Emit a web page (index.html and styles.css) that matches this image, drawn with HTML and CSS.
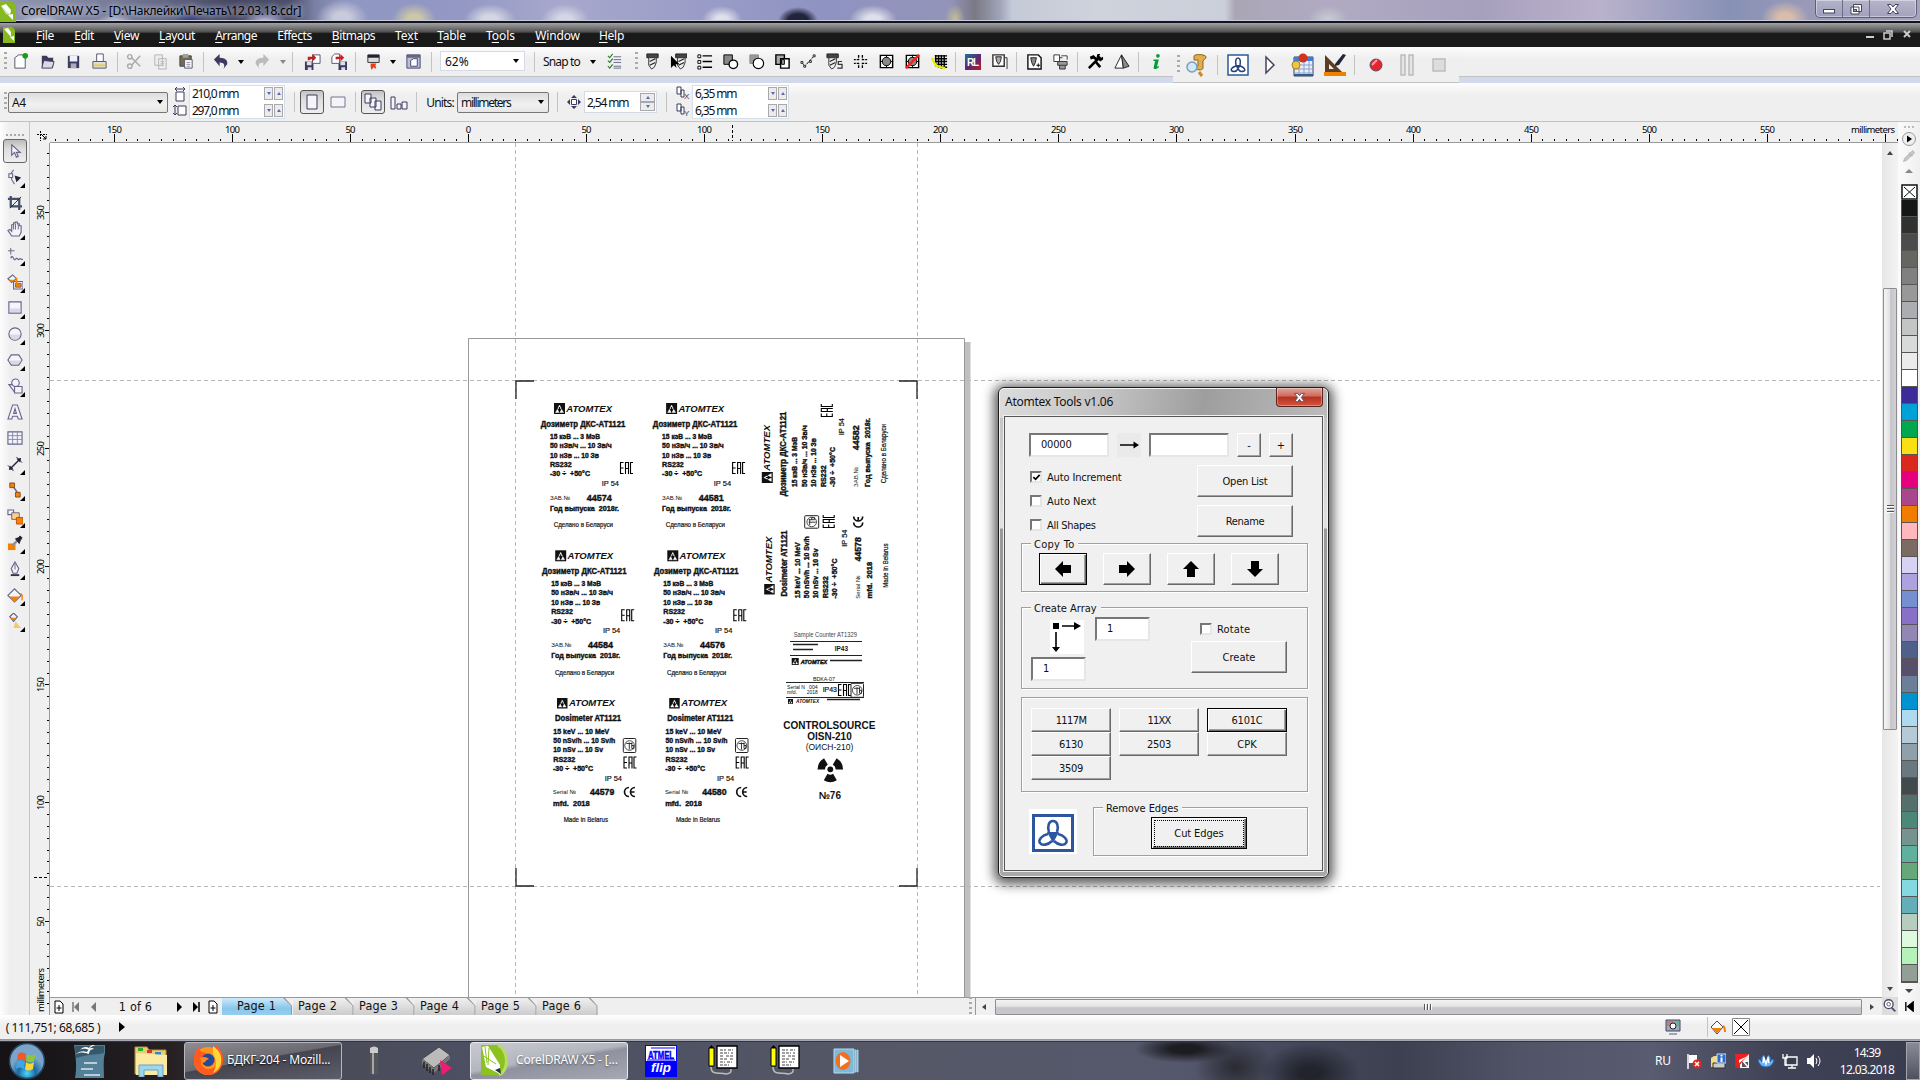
FILE: index.html
```html
<!DOCTYPE html>
<html lang="en">
<head>
<meta charset="utf-8">
<title>CorelDRAW X5</title>
<link rel="stylesheet" href="styles.css">
</head>
<body>
<header class="titlebar">
  <svg class="app-logo" viewBox="0 0 16 20"><path d="M0 0h13l3 4v16H0z" fill="#86b81f"/><path d="M1 4l9 9 1-5-5-6zM8 13l5 5v-6z" fill="#fff"/><path d="M1 4l5 8 4 1z" fill="#d4ecc0"/></svg>
  <span class="title-text" data-w="280">CorelDRAW X5 - [D:\Наклейки\Печать\12.03.18.cdr]</span>
  <div class="win-buttons">
    <span class="wb"><svg viewBox="0 0 14 12"><rect x="1.500" y="6.500" width="11" height="3.500" fill="#fff" stroke="#43465a"/></svg></span>
    <span class="wb"><svg viewBox="0 0 14 12"><path d="M4.500 1.500h8v7h-8zM2 4h8v7H2z" fill="#fff" stroke="#43465a"/><rect x="4.500" y="6.500" width="3" height="2" fill="#9a9bb5" stroke="#43465a"/></svg></span>
    <span class="wb wide"><svg viewBox="0 0 14 12"><path d="M1.500 1.500h3.500l2 2.500 2-2.500h3.500L9 6l3.500 4.500H9L7 8l-2 2.500H1.500L5 6z" fill="#fff" stroke="#43465a"/></svg></span>
  </div>
</header>
<nav class="menubar">
  <div class="row" id="menu"></div>
</nav>
<div class="toolbar-band">
  <div class="row toolbar-main" id="tools"></div>
  <div class="row toolbar-float" id="macros"></div>
  <div class="toolbar-rest"></div>
</div>
<div class="dock-strip"></div>
<div class="row propbar" id="props"></div>
<main class="main">
  <aside class="toolbox" id="toolbox"></aside>
  <section class="work">
    <svg class="ruler-h" id="rulerH" viewBox="30 122 1868 21"></svg>
    <svg class="ruler-v" id="rulerV" viewBox="30 143 20 872"></svg>
    <svg class="canvas" id="canvas" viewBox="50 143 1832 854"></svg>
    <div class="vscroll">
      <span class="arr up"></span><span class="vthumb"><i></i><i></i><i></i></span><span class="arr down"></span>
    </div>
    <div class="pagebar">
      <div class="row pager" id="pager"></div>
      <div class="hscroll"><span class="arr left"></span><span class="hthumb"><i></i><i></i><i></i></span><span class="arr right"></span></div>
    </div>
    <div class="nav-zoom"><svg viewBox="0 0 18 18"><circle cx="7.500" cy="7" r="5" fill="#fff" stroke="#4b4966" stroke-width="1.500"/><circle cx="7.500" cy="7" r="2" fill="none" stroke="#4b4966"/><path d="M11 11l4 4" stroke="#4b4966" stroke-width="2"/></svg></div>
  </section>
  <aside class="palette">
    <span class="dots"></span>
    <svg class="pal-go" viewBox="0 0 16 14"><circle cx="8" cy="7" r="6.500" fill="#eee" stroke="#999"/><path d="M6 3.500l5 3.500-5 3.500z"/></svg>
    <svg class="pal-pick" viewBox="0 0 16 16"><path d="M2 14l1-3 5-5 2 2-5 5zM8 4l4 4M9 6l3-4 2 2-3 4z" fill="#ccc" stroke="#bbb" stroke-width="1.300"/></svg>
    <span class="arr up"></span>
    <svg class="nocolor" viewBox="0 0 17 16"><rect x="1" y="1" width="15" height="14" fill="#fff" stroke="#111" stroke-width="1.500"/><path d="M3 3l11 10M14 3L3 13" stroke="#111"/></svg>
    <div class="swatches" id="swatches"></div>
    <span class="arr down"></span>
    <svg class="pal-end" viewBox="0 0 12 12"><path d="M2 1v10M10 1L4 6l6 5z" stroke="#000" stroke-width="1.500"/></svg>
  </aside>
</main>
<footer class="row statusbar" id="status"></footer>
<div class="row taskbar" id="taskbar"></div>

<section class="dialog">
  <div class="dlg-title"><span data-w="108">Atomtex Tools v1.06</span>
    <button class="dlg-close"><svg viewBox="0 0 14 12"><path d="M1.500 1.500h3.500l2 2.500 2-2.500h3.500L9 6l3.500 4.500H9L7 8l-2 2.500H1.500L5 6z" fill="#fff" stroke="#5b4a55"/></svg></button></div>
  <div class="dlg-body">
    <div class="dlg-numbers">
      <span class="field f80"><b data-w="30">00000</b></span>
      <span class="arrow-pic"><svg viewBox="0 0 24 24"><path d="M3 12h16" stroke="#000" stroke-width="1.500"/><path d="M16.500 8.500L22 12l-5.500 3.500z"/></svg></span>
      <span class="field f80"></span>
      <button class="btn sq">-</button><button class="btn sq">+</button>
    </div>
    <div class="dlg-options">
      <div class="checks">
        <label><i class="cb"><svg viewBox="0 0 10 10"><path d="M1.500 4.500l2.500 2.500 4.500-5" fill="none" stroke="#000" stroke-width="2"/></svg></i><span data-w="75">Auto Increment</span></label>
        <label><i class="cb"></i><span data-w="49">Auto Next</span></label>
        <label><i class="cb"></i><span data-w="49">All Shapes</span></label>
      </div>
      <div class="stack"><button class="btn big"><span data-w="45">Open List</span></button><button class="btn big"><span data-w="39">Rename</span></button></div>
    </div>
    <div class="group copy"><span class="legend"><span data-w="40">Copy To</span></span>
      <button class="btn ab def"><svg viewBox="0 0 16 16"><path d="M0 8l8-8v4h8v8H8v4z"/></svg></button>
      <button class="btn ab"><svg viewBox="0 0 16 16"><path d="M16 8L8 0v4H0v8h8v4z"/></svg></button>
      <button class="btn ab"><svg viewBox="0 0 16 16"><path d="M8 0l8 8h-4v8H4V8H0z"/></svg></button>
      <button class="btn ab"><svg viewBox="0 0 16 16"><path d="M8 16l8-8h-4V0H4v8H0z"/></svg></button>
    </div>
    <div class="group array"><span class="legend"><span data-w="63">Create Array</span></span>
      <div class="arr-col">
        <span class="arr-pic"><svg viewBox="0 0 34 34"><path d="M3 3h6v6H3zM24 2l7 4-7 4zM2 27h8l-4 5z"/><path d="M12 6h14M6 12v17" stroke="#000" stroke-width="1.600"/></svg></span>
        <span class="field f55">1</span>
      </div>
      <span class="field f55 top">1</span>
      <div class="rot"><label><i class="cb"></i><span data-w="33">Rotate</span></label><button class="btn big"><span data-w="33">Create</span></button></div>
    </div>
    <div class="group models">
      <button class="btn"><span data-w="31">1117M</span></button><button class="btn"><span data-w="23">11XX</span></button><button class="btn def"><span data-w="31">6101C</span></button>
      <button class="btn"><span data-w="24">6130</span></button><button class="btn"><span data-w="24">2503</span></button><button class="btn"><span data-w="19">CPK</span></button>
      <button class="btn"><span data-w="24">3509</span></button>
    </div>
    <div class="dlg-foot">
      <svg class="atom" viewBox="0 0 48 45"><rect width="48" height="45" fill="#fff"/><rect x="4.500" y="6.500" width="39" height="35" fill="#fff" stroke="#2d55a0" stroke-width="3"/><g fill="none" stroke="#2d55a0" stroke-width="2.600"><path d="M20 23c-2-6 0-11 4-11s6 5 4 11"/><path d="M19 25c-6 1-10 6-8 9s8 2 12-2"/><path d="M29 25c6 1 10 6 8 9s-8 2-12-2"/></g><path d="M18 23h12l-6 11z" fill="#2d55a0"/></svg>
      <div class="group remove"><span class="legend"><span data-w="72">Remove Edges</span></span>
        <button class="btn big def"><span class="focus"><span data-w="49">Cut Edges</span></span></button></div>
    </div>
  </div>
</section>
<script src="app.js"></script>
</body>
</html>
```
FILE: styles.css
```css
*{box-sizing:border-box}
body{margin:0;width:1920px;height:1080px;overflow:hidden;display:flex;flex-direction:column;background:#f0f0f0;font:12px "Noto Sans",sans-serif;color:#111;position:relative}
svg{display:block;flex:none}
button{font:inherit;color:inherit;padding:0;margin:0;border:0}
.row{display:flex;align-items:center}
.row>*{flex:none}
.cell{display:flex;justify-content:center;align-items:center;white-space:pre}
[data-w]{white-space:pre;display:inline-block}

.titlebar{height:23px;flex:none;display:flex;align-items:flex-start;border-bottom:2px solid #15151f;box-shadow:inset 0 -1px #c8cbdc;
 background:radial-gradient(ellipse 20px 8px at 40px 22px,#dcdde6,transparent),radial-gradient(ellipse 20px 8px at 115px 22px,#cfd2df,transparent),radial-gradient(ellipse 16px 9px at 190px 21px,#2b358f,transparent),radial-gradient(ellipse 22px 9px at 265px 21px,#c4c3ea,transparent),radial-gradient(ellipse 26px 18px at 342px 18px,#c9cadb 30%,transparent),radial-gradient(ellipse 22px 17px at 414px 20px,#cdc8a4 30%,transparent),radial-gradient(ellipse 26px 16px at 490px 20px,#d4d6e4 30%,transparent),radial-gradient(ellipse 24px 16px at 565px 20px,#d3d6e4 30%,transparent),radial-gradient(ellipse 20px 14px at 722px 20px,#dfe0ea 30%,transparent),radial-gradient(ellipse 20px 14px at 798px 21px,#22243c 50%,transparent),radial-gradient(ellipse 24px 15px at 873px 20px,#dfe0e9 30%,transparent),radial-gradient(ellipse 10px 15px at 955px 19px,#c5bd95,transparent),radial-gradient(ellipse 20px 14px at 1328px 20px,#c8cfd0,transparent),radial-gradient(ellipse 24px 18px at 1785px 19px,#d9bda9 30%,transparent),
 linear-gradient(90deg,#8f98b4 0,#858ba5 60px,#686d8a 150px,#454760 230px,#4a4d68 290px,#7a81a5 315px,#8f97c2 345px,#9398c4 460px,#a7a8cd 560px,#8f93c2 820px,#9394b8 950px,#7b7985 975px,#9fa5b8 1000px,#c4cad7 1012px,#cfd3dc 1100px,#cbcfd9 1225px,#aaa6b5 1235px,#b1aac3 1330px,#a7a0bd 1480px,#bab2cc 1600px,#8791b6 1730px,#9a9ab8 1810px,#a6a1bd)}
.app-logo{width:16px;height:20px;margin-top:2px}
.title-text{margin-left:5px;line-height:22px;text-shadow:0 0 5px #cdd3ea,0 0 8px #b8bfda;font-size:12px;color:#000}
.win-buttons{margin-left:auto;margin-right:3px;display:flex;width:102px;height:18px;border:1px solid #5d5f78;border-top:0;border-radius:0 0 5px 5px;background:linear-gradient(#d6d5e366,#a5a2bd66);box-shadow:inset 0 0 0 1px #ffffff66}
.wb{width:27px;display:flex;align-items:center;justify-content:center;border-right:1px solid #6d6e86}
.wb.wide{width:46px;border:0}
.wb svg{width:14px;height:12px}
.menubar{height:24px;flex:none;background:linear-gradient(#a3a3a3,#555 35%,#2f2f2f 42%,#191919 44%);color:#fff}
.menubar .row{height:24px}
.menubar u{text-underline-offset:2px}

.toolbar-band{height:30px;flex:none;display:flex;align-items:flex-start;background:linear-gradient(#fcfcfc,#efefef 40%)}
.toolbar-main{width:1173px;height:30px;border-bottom:1px solid #c2c2c2}
.toolbar-float{width:286px;height:36px;background:linear-gradient(#fcfcfc,#efefef 33%);border-bottom:1px solid #c2c2c2;position:relative;z-index:1}
.toolbar-rest{flex:1;height:30px;border-bottom:1px solid #c2c2c2}
.dock-strip{height:6px;flex:none;background:#d2d9ec}
.sep{height:20px;width:1px;background:#c3c3c3}
.grip{width:3px;height:20px;background:repeating-linear-gradient(#aaa 0 2px,transparent 2px 5px)}
.caret{width:0;height:0;border:3px solid transparent;border-top:4px solid #000;border-bottom:0}
.caret.dim{border-top-color:#888}
.box{background:#fff;border:1px solid #d5dbe4;display:flex;align-items:center;justify-content:space-between;padding:0 5px 0 4px}
.zoombox{height:20px;margin-bottom:1px}
.box.step{height:22px;padding:0 1px 0 2px}
.propbar{height:39px;flex:none;background:linear-gradient(#fdfdfd,#efefef 33%);border-bottom:1px solid #c2c2c2}
.combo{height:21px;border:1px solid #777;border-radius:2px;background:linear-gradient(#ddd,#f1f1f1 60%,#e6e6e6);display:flex;align-items:center;justify-content:space-between;padding:0 4px 0 3px}
.cell.pair{display:flex;flex-direction:column;align-items:stretch;border:1px solid #d5e0ea;background:#fff;height:34px}
.pair>div{flex:1;display:flex;justify-content:space-between;align-items:center;padding:0 1px 0 2px}
.spin{display:flex;gap:1px}
.spin i{width:9px;height:13px;border:1px solid #a9a9ad;background:#ececec;display:flex;align-items:center;justify-content:center}
.spin i::after{content:"";border:2.5px solid transparent;border-top:3px solid #5a6ab5;border-bottom:0}
.spin i.u::after{border-top:0;border-bottom:3px solid #5a6ab5}
.spin.v{flex-direction:column;gap:0}
.spin.v i{width:15px;height:9px}
.pressed{height:24px;border:1px solid #555;border-radius:3px;background:linear-gradient(#c3c3c3,#dedede 40%,#eee);display:flex;align-items:center;justify-content:center}
.icons2{display:flex;flex-direction:column;gap:1px}

.main{height:893px;flex:none;display:flex}
.toolbox{width:30px;border-right:1px solid #c4c4c4;background:linear-gradient(90deg,#fdfdfd,#efefef 33%);padding-top:12px;display:flex;flex-direction:column;align-items:flex-start}
.toolbox::before{content:"";width:18px;height:2px;margin:0 0 3px 6px;background:repeating-linear-gradient(90deg,#aaa 0 2px,transparent 2px 4px);flex:none}
.tool{width:24px;height:24px;margin:0 0 2.12px 3px;display:flex;align-items:center;justify-content:center;flex:none;position:relative}
.tool svg{width:16px;height:16px}
.tool.fly::after{content:"";position:absolute;right:2px;bottom:1px;border-left:5px solid transparent;border-bottom:5px solid #000}
.tool.on{border:1px solid #666;border-radius:3px;background:linear-gradient(#bbb,#ddd 40%,#eee)}
.work{width:1868px;display:grid;grid-template-columns:20px 1832px 16px;grid-template-rows:21px 854px 18px}
.ruler-h{grid-column:1/4;width:1868px;height:21px}
.ruler-v{grid-row:2/4;grid-column:1;width:20px;height:872px}
.canvas{width:1832px;height:854px;background:#fff}
svg text{font-family:"Liberation Sans",Arial,sans-serif}
.ruler-h text,.ruler-v text{font-family:"Noto Sans",sans-serif;font-size:9.5px;text-anchor:middle}
.vscroll{display:flex;flex-direction:column;align-items:center;justify-content:space-between;padding:8px 0 6px;background:linear-gradient(90deg,#e6e6e6,#f3f3f3)}
.arr{width:0;height:0;border:3px solid transparent;flex:none}
.arr.up{border-bottom:4px solid #444;border-top:0}
.arr.down{border-top:4px solid #444;border-bottom:0}
.arr.left{border-right:4px solid #444;border-left:0}
.arr.right{border-left:4px solid #444;border-right:0}
.vthumb{width:14px;height:442px;margin-bottom:125px;border:1px solid #8d8d90;border-radius:1px;background:linear-gradient(90deg,#f4f4f4,#e4e4e6 45%,#c6c6ca 55%,#d2d2d6);display:flex;flex-direction:column;gap:1px;align-items:center;justify-content:center}
.vthumb i{width:7px;height:2px;border-top:1px solid #555;background:#fff}
.pagebar{display:flex;border-top:1px solid #999;background:#efefef;grid-column:2}
.pager{width:926px;height:17px;border-right:1px solid #999}
.hscroll{flex:1;display:flex;align-items:center;justify-content:space-between;padding:0 8px 0 6px;background:#f0f0f0}
.hthumb{width:867px;height:16px;border:1px solid #8d8d90;border-radius:1px;background:linear-gradient(#f4f4f4,#e4e4e6 45%,#c6c6ca 55%,#c9c9cc);display:flex;gap:1px;align-items:center;justify-content:center}
.hthumb i{height:6px;width:2px;border-left:1px solid #555;background:#fff}
.nav-zoom svg{width:16px;height:18px;background:#ddd}
.pg{font:12.5px "DejaVu Sans Condensed","DejaVu Sans",sans-serif;height:17px}
.tab{height:17px;clip-path:polygon(0 0,calc(100% - 8px) 0,100% 45%,100% 100%,0 100%);background:linear-gradient(#f0f0f0,#ccc)}
.tabwrap{height:17px;background:#999;clip-path:polygon(0 0,calc(100% - 7px) 0,100% 45%,100% 100%,0 100%);padding-right:1px}
.tab.on{background:linear-gradient(#cdebfb,#8ac6ea 60%,#94cdee)}
.tab .cell{height:15px;padding-right:10px}
.tab.on .cell{padding-right:0}
.palette{width:22px;display:flex;flex-direction:column;align-items:center;background:linear-gradient(90deg,#fbfbfb,#f0f0f0);padding-top:4px}
.dots{width:11px;height:2px;background:repeating-linear-gradient(90deg,#bbb 0 2px,transparent 2px 4px)}
.pal-go{width:16px;height:14px;margin-top:4px}
.pal-pick{width:14px;height:14px;margin:3px 0 6px}
.palette .arr{border-left-width:4px;border-right-width:4px}
.palette .arr.up{border-bottom-color:#888}
.nocolor{width:17px;height:16px;margin-top:11px}
.swatches{width:17px;border:1px solid #555;border-top:0}
.swatches i{display:block;height:17px;border-bottom:1px solid #555}
.palette .arr.down{margin:6px 0 8px}
.pal-end{width:13px;height:11px}

.statusbar{height:25px;flex:none;background:linear-gradient(#fff,#efefef 40%);border-bottom:1px solid #999}
.taskbar{height:40px;flex:none;color:#fff;border-top:1px solid #a5a8b2;box-shadow:inset 0 1px #33343e;background:
 radial-gradient(ellipse 50px 14px at 1185px 8px,#1d1c22 30%,transparent),
 radial-gradient(ellipse 40px 30px at 1235px 26px,#2a2a32,transparent),
 radial-gradient(ellipse 50px 30px at 1310px 32px,#22232c 20%,transparent),
 linear-gradient(90deg,#141214 0,#1d1a1e 100px,#262022 170px,#3a3944 260px,#4a4c59 345px,#4d5063 480px,#4f5262 640px,#565867 900px,#55586c 1180px,#44485a 1290px,#3d4050 1400px,#515467 1520px,#595c70 1650px,#3f4255 1780px,#3a3d4e)}
.tbtn{height:38px;border:1px solid #b7b8bf;border-radius:3px;color:#fff;background:linear-gradient(170deg,#8f8d92,#6b6a72 45%,#454550 47%,#5d5e6b);text-shadow:0 1px 2px #000}
.cell.tbtn{justify-content:flex-start;gap:2px;padding:0 0 2px 6px}
.cell.tbtn.on{gap:5px}
.tbtn.on{background:linear-gradient(170deg,#c9cad0,#b4b6bf 45%,#8f929e 52%,#a6a8b3);border-color:#e9e9ee;text-shadow:0 1px 2px #555}
.cell.clock{display:flex;flex-direction:column;align-items:center;line-height:17px}
.showdesk{height:38px;border:1px solid #a2a3ab;background:linear-gradient(#8a8b98,#4f5160)}

.dialog{position:absolute;left:998px;top:387px;width:331px;height:491px;border:1px solid #1c1c1c;border-radius:6px;padding:0 5px 6px;background:linear-gradient(100deg,#dcdcdc 0,#c6c6c6 30%,#9e9e9e 62%,#bcbcbc) 0 0/100% 30px no-repeat,linear-gradient(#bbb,#e2e2e2 140px,#999 141px,#a9a9a9);box-shadow:inset 0 0 0 1px #f3f3f3,0 2px 12px 4px #000000a8;font:11px "DejaVu Sans Condensed","DejaVu Sans",sans-serif}
.dlg-title{height:28px;display:flex;justify-content:space-between;font:12px "Noto Sans",sans-serif;line-height:27px;padding-left:1px}
.dlg-close{width:47px;height:19px;border:1px solid #5a2420;border-top:0;border-radius:0 0 4px 4px;background:linear-gradient(#e0a59a,#cf6a5b 45%,#b5301f 50%,#d5563f);display:flex;justify-content:center;align-items:center;box-shadow:inset 0 0 0 1px #ffffff50}
.dlg-close svg{width:13px;height:11px}
.dlg-body{height:455px;border:1px solid #555;box-shadow:0 0 0 1px #f0f0f0;background:#f0f0f0;padding:16px 0 0 16px;display:flex;flex-direction:column;align-items:flex-start}
.dlg-numbers{display:flex;gap:8px;margin-left:8px}
.field{height:24px;background:#fff;border:2px solid;border-color:#777 #e6e6e6 #e6e6e6 #777;padding:2px 0 0 10px;line-height:15px}
.field b{font-weight:400}
.f80{width:80px}.f55{width:55px}
.arrow-pic{width:24px;height:24px;background:#eaeaea}
.btn{background:#f0f0f0;border:1px solid;border-color:#fff #696969 #696969 #fff;box-shadow:inset -1px -1px #a0a0a0;display:flex;align-items:center;justify-content:center}
.sq{width:24px;height:24px}
.dlg-options{display:flex;margin-left:9px;margin-top:8px;height:72px}
.checks{width:167px;display:flex;flex-direction:column;gap:0}
label{display:flex;align-items:center;gap:5px;height:24px}
.cb{width:12px;height:12px;background:#fff;border:2px solid;border-color:#777 #e6e6e6 #e6e6e6 #777;flex:none}
.cb svg{width:9px;height:9px}
.stack{display:flex;flex-direction:column;gap:8px}
.big{width:96px;height:32px}
.group{width:287px;border:1px solid #a0a0a0;box-shadow:1px 1px #fff,inset 1px 1px #fff;position:relative;display:flex;flex:none}
.legend{position:absolute;left:9px;top:-7px;background:#f0f0f0;padding:0 4px 0 3px;line-height:15px}
.copy{height:49px;margin-top:6px;padding:9px 0 0 17px;gap:16px}
.ab{width:48px;height:32px}
.ab svg{width:16px;height:16px}
.def{border-color:#000;box-shadow:inset 1px 1px #fff,inset -1px -1px #696969,inset -2px -2px #a0a0a0}
.array{height:82px;margin-top:15px;padding:9px 0 0 9px}
.arr-col{width:64px;display:flex;flex-direction:column;padding-top:3px}
.arr-pic{margin-left:19px;width:34px;height:34px;background:#fff}
.arr-col .field{margin-top:3px}
.rot{margin-left:41px}
.rot label{margin-left:9px}
.models{height:95px;margin-top:8px;padding:10px 0 0 9px;display:grid;grid-template-columns:80px 80px 80px;grid-auto-rows:24px;column-gap:8px}
.dlg-foot{display:flex;margin:15px 0 0 8px}
.atom{width:48px;height:45px;margin:2px 16px 0 0}
.remove{width:215px;height:49px;padding:9px 0 0 57px}
.focus{outline:1px dotted #000;width:88px;height:25px;display:flex;align-items:center;justify-content:center}
```
FILE: app.js
```js
const $ = id => document.getElementById(id);
const S = (w, h, body) => `<svg width="${w}" height="${h}" viewBox="0 0 ${w} ${h}">${body}</svg>`;
const T = (s, w) => `<span data-w="${w}">${s}</span>`;

// Lays items [centre x, width, markup, class] along a row, starting at x0.
function row(id, items, x0 = 0) {
  let end = x0, out = '';
  for (const [c, w, html, cls = ''] of items) {
    const m = c - w / 2 - end;
    out += `<div class="cell ${cls}" style="margin-left:${m.toFixed(2)}px;width:${w}px">${html}</div>`;
    end += m + w;
  }
  $(id).innerHTML = out;
}
const sep = x => [x, 1, '', 'sep'];
const grip = x => [x, 3, '', 'grip'];
const caret = (x, d = '') => [x, 6, `<i class="caret ${d}"></i>`];
const I = (x, body) => [x, 17, `<svg width="17" height="17" viewBox="0 0 18 18">${body}</svg>`];

const N = '#3c3a5e';
const page = '<path d="M3 5l4-3h7v14H3z" fill="#fff" stroke="#55536f"/>';
const floppy = (x, y) => `<g transform="translate(${x} ${y})"><path d="M0 0h9v9H0z" fill="${N}"/><path d="M2 0h5v4H2zM3 6h4v3H3z" fill="#dde"/></g>`;
const screw = '<path d="M3 1h12v4H3z" fill="#444" stroke="#222"/><path d="M5 5h8v5l-2 5-3 2-3-4z" fill="#eee" stroke="#333"/><path d="M6 9l6-3M6 13l6-3" stroke="#222" stroke-width="1.200"/>';
const eightRect = '<path d="M2.500 2.500h13v13h-13z" fill="#fff" stroke="#000" stroke-width="1.500"/><path d="M2 9h14M9 2v14" stroke="#000"/><circle cx="9" cy="9" r="4.500" fill="#888" stroke="#000"/>';
const red = '#c41e22';

// Menu
row('menu', [[9, 12, S(12, 16, '<path d="M0 0h9l3 3v13H0z" fill="#86b81f"/><path d="M1 2l7 8V5L5 1zM7 10l4 4v-5z" fill="#fff"/>')],
  ...[['<u>F</u>ile', 36, 18], ['<u>E</u>dit', 74, 20], ['<u>V</u>iew', 114, 25], ['<u>L</u>ayout', 159, 36], ['<u>A</u>rrange', 215, 42], ['Effe<u>c</u>ts', 277, 35], ['<u>B</u>itmaps', 332, 43], ['Te<u>x</u>t', 395, 23], ['<u>T</u>able', 437, 29], ['T<u>o</u>ols', 486, 29], ['<u>W</u>indow', 535, 45], ['<u>H</u>elp', 599, 25]].map(([s, x, w]) => [x + w / 2, w, T(s, w)]),
  [1870, 8, S(8, 10, '<path d="M0 6h8v2H0z" fill="#ccc"/>')],
  [1888, 10, S(10, 10, '<path d="M3 1h6v6M1 3h6v6H1z" fill="none" stroke="#ccc" stroke-width="1.500"/>')],
  [1907, 8, S(8, 10, '<path d="M1 1l6 6M7 1L1 7" stroke="#ccc" stroke-width="2"/>')]]);

// Standard toolbar
row('tools', [grip(5),
  I(20, page + '<circle cx="14" cy="3" r="3" fill="#1a9a1a"/>'),
  I(47, `<path d="M3 3h5l2 2h5v10H3z" fill="${N}"/><path d="M5 8l11 1-2 7H3z" fill="#d8dae8" stroke="${N}"/>`),
  I(73, `<path d="M3 3h12v13H3z" fill="${N}"/><path d="M5 3h8v6H5z" fill="#f0f0fa"/><path d="M6 11h6v5H6z" fill="#aab"/>`),
  I(99, '<path d="M6 1h7v8H6z" fill="#fff" stroke="#55536f"/><path d="M2 9h14v7H2z" fill="#ddd" stroke="#55536f"/><path d="M3 13h12" stroke="#e8d040" stroke-width="2"/>'), sep(117),
  I(134, '<path d="M15 3L6 13M15 14L6 5" stroke="#aaa" stroke-width="1.500"/><circle cx="4" cy="4" r="2.300" fill="none" stroke="#aaa" stroke-width="1.500"/><circle cx="4" cy="14" r="2.300" fill="none" stroke="#aaa" stroke-width="1.500"/>'),
  I(160, '<path d="M3 2h8v11H3zM7 6h8v11H7z" fill="#eee" stroke="#b5b5b5"/><path d="M9 9h4M9 11h4M9 13h4" stroke="#bbb"/>'),
  I(186, '<path d="M2 3h12v11H2z" fill="#75694f" stroke="#444"/><path d="M5 1h6v4H5z" fill="#9ea39a"/><path d="M7 7h8v9H7z" fill="#fff" stroke="#55536f"/><path d="M9 10h4M9 12h4M9 14h4" stroke="#88a"/>'), sep(203),
  I(221, `<path d="M7 1v4c6 0 9 3 8 7l-4 5c2-4 1-7-4-7v4L1 7z" fill="${N}"/>`), caret(241),
  I(261, '<path d="M11 1v4c-6 0-9 3-8 7l4 5c-2-4-1-7 4-7v4l6-7z" fill="#bbb"/>'), caret(283, 'dim'), sep(292),
  I(312, `${floppy(1, 9)}<path d="M9 2h8v9H9z" fill="#fff" stroke="#55536f"/><path d="M4 8V4h5V1l4 4-4 4V6z" fill="${red}"/>`),
  I(338, `${floppy(9, 9)}<path d="M2 4l3-3h5v10H2z" fill="#fff" stroke="#55536f"/><path d="M6 7V4h5V1l4 4-4 4V6z" fill="${red}"/>`), sep(355),
  I(373, '<path d="M3 2h12v8H3z" fill="#ddd" stroke="#333"/><path d="M3 2h12v3H3z" fill="#223"/><path d="M6 11h6l-1 2 1 4-3-2-2 3-1-3z" fill="#ee3a10"/>'), caret(393),
  I(413, '<path d="M2 2h14v14H2z" fill="#b9bfdf" stroke="#446"/><path d="M2 2h14v3H2z" fill="#667"/><path d="M6 8l3-2h4v8H6z" fill="#fff" stroke="#446"/>'), sep(431),
  [482.5, 85, T('62%', 24) + '<i class="caret"></i>', 'box zoombox'], sep(534),
  [561.5, 37, T('Snap to', 37)], caret(593),
  I(614, '<path d="M8 4h8M8 7h8M8 10h8M8 14h8M8 16h8" stroke="#668"/><path d="M2 3l2 2 3-4M2 8l2 2 3-4M2 14l2 2 3-4" stroke="#2a7a2a" fill="none" stroke-width="1.200"/>'), grip(636),
  I(652, screw), I(678, `<g transform="translate(3)">${screw}</g><path d="M1 3l9 9-4 0 1 4-3-3-3 3z"/>`),
  I(704, '<path d="M2 2h3v3H2zM2 8h3v3H2zM2 14h3v3H2z" fill="#fff" stroke="#000"/><path d="M7 3h10M7 9h10M7 15h10" stroke="#000" stroke-width="1.500"/>'),
  I(730, '<path d="M2 2h9v10H2z" fill="#888" stroke="#000"/><circle cx="12" cy="12" r="4.500" fill="#fff" stroke="#000" stroke-width="1.400"/>'),
  I(756, '<path d="M2 2h9v9H2z" fill="#999" stroke="#888"/><circle cx="11" cy="11" r="5.500" fill="#fff" stroke="#000" stroke-width="1.200"/>'),
  I(782, '<path d="M2 2h9v10H2z" fill="#aaa" stroke="#000" stroke-width="1.500"/><path d="M7 6h9v10H7z" fill="#fff" stroke="#000" stroke-width="1.500"/><path d="M8 7h3v5H8z" fill="#999" stroke="#000"/>'),
  I(808, '<path d="M2 10l3 4L15 3" fill="none" stroke="#000" stroke-dasharray="3 1"/><path d="M1 9h2v2H1zM4 13h2v2H4zM10 8h2v2h-2zM14 2h2v2h-2z" fill="#fff" stroke="#222"/>'),
  I(834, `<g transform="translate(-2)">${screw}</g><path d="M17 9h-4v3h4v4h-5" fill="none" stroke="#333" stroke-width="1.300"/>`),
  I(860, '<path d="M7 2v5H2M11 2v5h5M7 16v-5H2M11 16v-5h5" fill="none" stroke="#000" stroke-width="1.400" stroke-dasharray="3 1"/>'),
  I(886, eightRect), I(912, eightRect + '<path d="M2 16L16 2" stroke="#e22" stroke-width="2.500"/>'),
  I(939, '<path d="M4 3h13M4 6h13M4 9h13M5 12h12M8 15h9M5 2v12M8 2v14M11 2v15M14 2v15" stroke="#000" stroke-width="1.500"/><path d="M1 5c3 8 5 10 14 11" fill="none" stroke="#e8f000" stroke-width="2.500"/>'), sep(955),
  [973, 18, '<svg width="16" height="16" viewBox="0 0 16 16"><defs><linearGradient id="rl" x2="1" y2="1"><stop stop-color="#167a90"/><stop offset=".5" stop-color="#5a2878"/><stop offset="1" stop-color="#b5201c"/></linearGradient></defs><rect width="16" height="16" fill="url(#rl)"/><text x="2" y="12" font-size="10" font-weight="700" fill="#fff" textLength="12">RL</text></svg>'],
  I(999, '<path d="M5 5h12v12" fill="none" stroke="#333"/><path d="M2 2h12v12H2z" fill="#fff" stroke="#333" stroke-width="1.500"/><path d="M5 4h6l-1 5-2 3-2-3z" fill="#aaa" stroke="#222"/>'), sep(1016),
  I(1034, '<path d="M2 2h11l3 3v12H2z" fill="#fff" stroke="#111" stroke-width="1.500"/><path d="M5 5h6l-1 5-2 4-2-4z" fill="#888" stroke="#222"/><path d="M11 13h4M13 11v4" stroke="#000"/>'),
  I(1060, '<path d="M2 2h6v7H2zM10 3h6v4" fill="#fff" stroke="#333"/><path d="M8 5h3M6 9h10v4H6zM8 13v4h6v-4" fill="#999" stroke="#333"/>'), sep(1077),
  I(1095, '<path d="M2 16L12 6M9 9l5 6" stroke="#000" stroke-width="2.800"/><path d="M3 4l4-2 4 4-2 2-2-2-3 1zM11 1h3l-1 2 2 2 2-1v3l-3 2-4-4z"/>'),
  I(1121, '<path d="M9 2L2 16h9z" fill="#fff" stroke="#222"/><path d="M9 2l8 12-6 2z" fill="#888" stroke="#222"/>'), sep(1138),
  I(1156, '<circle cx="10.500" cy="3" r="2" fill="#0a9a3c"/><path d="M6 7h5.500l-2 7.500 2-.8v1.300c-2 2-6 3-5.500 0l1.500-6.500H5.500z" fill="#0a9a3c"/>')]);

const atom = '<rect x="1" y="1" width="20" height="20" fill="#fff" stroke="#2a5a9a" stroke-width="1.500"/><g fill="none" stroke="#24427c" stroke-width="1.500"><path d="M9 11c-1-4 0-7 2-7s3 3 2 7"/><path d="M9 12c-4 1-6 4-4 5s4 1 6-2"/><path d="M13 12c4 1 6 4 4 5s-4 1-6-2"/></g><path d="M8 11h6l-3 5z" fill="#24427c"/>';
row('macros', [grip(1178),
  [1197, 24, S(24, 24, '<path d="M9 3c0-2 12-2 12 1s-3 2-3 4v7c0 3-8 2-8 0l3-2V7H9z" fill="#dfae50" stroke="#916616"/><path d="M14 19l3 4" stroke="#c88a2a" stroke-width="3"/><circle cx="7" cy="14" r="5" fill="#cdeaf8" stroke="#7d9bb5" stroke-width="1.500"/>')],
  sep(1217), [1238, 22, S(22, 22, atom)],
  [1269.5, 12, S(12, 20, '<path d="M2 2l8 8-8 8z" fill="#fff" stroke="#44425e" stroke-width="1.500"/>')],
  [1302, 24, S(24, 24, '<path d="M4 4h19v19H4z" fill="#e8eefb" stroke="#345"/><path d="M4 4h19v4H4z" fill="#3c7be0"/><path d="M4 12h19M4 16h19M4 20h19M9 8v15M14 8v15M19 8v15" stroke="#8aa2cc"/><path d="M4 22h19" stroke="#345a90" stroke-width="2"/><circle cx="13" cy="5" r="4.500" fill="#d0341c"/><circle cx="6" cy="12" r="4" fill="#f0c63c" stroke="#a5832b"/>')],
  [1335, 24, S(24, 24, '<path d="M2 2v17h17zM6 11l5 5H6z" fill="#5c3c22" fill-rule="evenodd"/><path d="M12 11l8-10 3 1-7 10-4 1z" fill="#23233a"/><path d="M1 19h22v4H1z" fill="#f08000"/>')],
  sep(1354),
  [1375.5, 16, S(16, 16, '<circle cx="8" cy="8" r="6" fill="#e32530" stroke="#5a4a6a"/><path d="M4 8l5-5" stroke="#ff9a9a" stroke-width="2"/>')],
  [1407, 14, S(14, 22, '<path d="M1 1h4v20H1zM9 1h4v20H9z" fill="#e4e4e4" stroke="#bcbcbc" stroke-width="1.500"/>')],
  [1439, 14, S(14, 14, '<path d="M1 1h12v12H1z" fill="#ddd" stroke="#bdbdbd" stroke-width="1.500"/>')]], 1173);

// Property bar
const ST = `stroke="${N}" fill="none"`;
const spin = '<span class="spin"><i></i><i class="u"></i></span>';
const pair = (a, b, w) => `<div>${T(a, w)}${spin}</div><div>${T(b, w)}${spin}</div>`;
row('props', [grip(5), [88, 160, T('A4', 14) + '<i class="caret"></i>', 'combo'],
  [180, 14, `<div class="icons2">${S(14, 15, `<path d="M3 5h8v9H3z" fill="#fff" stroke="${N}"/><path d="M2 2h10M4 0L2 2l2 2M10 0l2 2-2 2" ${ST}/>`)}${S(14, 14, `<path d="M5 3h8v9H5z" fill="#fff" stroke="${N}"/><path d="M2 2v10M0 4l2-2 2 2M0 10l2 2 2-2" ${ST}/>`)}</div>`],
  [237, 96, pair('210,0 mm', '297,0 mm', 46), 'pair'], sep(294),
  [312, 24, S(12, 16, `<path d="M1 1h10v14H1z" fill="#f4f4fa" stroke="${N}"/>`), 'pressed'],
  [338, 16, S(16, 12, '<path d="M1 1h14v10H1z" fill="#f4f4fa" stroke="#77758f"/>')], sep(355),
  [373, 24, S(18, 18, `<path d="M1 1h6v9H1zM6 5h6v9H6zM11 8h6v9h-6z" fill="#f4f4fa" stroke="${N}"/>`), 'pressed'],
  [399, 18, S(18, 18, `<path d="M1 4h4v12H1zM7 11h4v5H7zM12 9h5v7h-5z" fill="#f4f4fa" stroke="${N}"/>`)], sep(416),
  [440, 28, T('Units:', 28)], [503, 92, T('millimeters', 49) + '<i class="caret"></i>', 'combo'], sep(557),
  [574, 14, S(14, 14, `<path d="M4.500 4.500h5v5h-5z" fill="#fff" stroke="${N}"/><path d="M7 0l3 3H4zM7 14l3-3H4zM0 7l3-3v6zM14 7l-3-3v6z" fill="${N}"/>`)],
  [620.500, 73, `${T('2,54 mm', 41)}<span class="spin v"><i class="u"></i><i></i></span>`, 'box step'], sep(666),
  [684, 18, `<div class="icons2">${['X', 'Y'].map(c => S(18, 16, `<path d="M2 1h4v7H2zM6 4h3v7H6z" fill="#fff" stroke="${N}"/><text x="9" y="13" font-size="8" fill="${N}">${c}</text>`)).join('')}</div>`],
  [740.500, 97, pair('6,35 mm', '6,35 mm', 41), 'pair']]);

// Toolbox
const G = 'stroke="#66648a" fill="#f4f4fb" stroke-width="1.200"', O = '#f28200';
const tools = [
  `<path d="M5 2v11l3-3 2 5 2-1-2-4h4z" ${G}/>`,
  `<path d="M7 1C2 6 4 11 8 16" ${G}/><path d="M2 5h4v4H2z" ${G}/><path d="M8 7l7 2-5 5z" fill="#223"/>`,
  `<path d="M4 1v11h12M1 4h12v12" stroke="#44506a" fill="none" stroke-width="2.400"/><path d="M3 14L15 2" stroke="#223"/>`,
  `<path d="M5 16l-4-6 2-1 2 2V4h2V2h2V1h2v2h2v2h2v7l-2 4z" ${G}/><path d="M7 4v5M9 3v6M12 4v5" stroke="#66648a"/>`,
  `<path d="M4 1v7M1 4h7" stroke="#66648a"/><path d="M4 12c2-6 3 4 5 1s3 2 4 0 2 1 4 0" stroke="#66648a" fill="none" stroke-width="1.300"/>`,
  `<path d="M1 5l5-4 4 4-5 4z" ${G}/><path d="M2 6h7l-4 3z" fill="${O}"/><path d="M7 8h10v8H7z" ${G}/><path d="M9 10h6v4H9z" fill="${O}" stroke="#66648a"/><path d="M10 4v7" stroke="${O}" stroke-width="2"/>`,
  `<path d="M2 2h13v12H2z" ${G}/><path d="M3 9h11v4H3z" fill="#d9d9e6"/>`,
  `<circle cx="8.500" cy="8.500" r="6.500" ${G}/><path d="M3 9h11a5.500 5.500 0 0 1-11 0z" fill="#d9d9e6"/>`,
  `<path d="M4.500 3h8l3.500 5.500-3.500 5.500h-8L1 8.500z" ${G}/><path d="M2 9h13l-3 4H5z" fill="#d9d9e6"/>`,
  `<path d="M2 7h6v8zM8 9h8v7H8z" ${G}/><circle cx="9" cy="5" r="4" ${G}/>`,
  `<path d="M1 16L6 1h5l5 15h-4l-1-3H6l-1 3zM7 10h3L8.500 5z" ${G} fill-rule="evenodd"/>`,
  `<path d="M1 2h15v13H1z" ${G}/><path d="M1 6h15M1 10h15M6 2v13M11 2v13" stroke="#8886a4"/>`,
  `<path d="M4 13l9-9" stroke="#223" stroke-width="1.500"/><path d="M1 10l6 6M10 1l6 6" stroke="#223"/><path d="M2 15l1-5 4 4zM15 2l-1 5-4-4z" fill="#223"/>`,
  `<path d="M6 4l7 10" stroke="#66648a" stroke-width="1.500"/><path d="M3 1h5v5H3zM9 11h5v5H9z" fill="${O}" stroke="#8a4a20"/>`,
  `<path d="M1 1h6v5H1z" ${G}/><path d="M5 4h8v7H5z" fill="#ffd080" stroke="#66648a"/><path d="M10 9h7v7h-7z" fill="${O}" stroke="#c05010"/>`,
  `<path d="M1 9h8v7H1z" fill="${O}"/><path d="M6 11l6-6" stroke="#8890a8" stroke-width="2.500"/><path d="M9 4l3-1 2-2 2 2-2 3-1 3z" fill="#223" stroke="#223"/>`,
  `<path d="M8.500 1l4 7-2 5h-4l-2-5z" ${G}/><path d="M8.500 3v6" stroke="#66648a"/><path d="M4 14h9v2H4z" fill="#334"/>`,
  `<path d="M1 9l7-7 7 7-7 7z" ${G}/><path d="M2 10h12l-6 6z" fill="${O}"/><path d="M14 7c3 0 2 4 2 7" stroke="${O}" fill="none" stroke-width="1.500"/>`,
  `<path d="M3 4l4-4 4 4-4 5z" ${G}/><path d="M4 5h6L7 8z" fill="${O}"/><path d="M9 9l6 7H7z" fill="#f7c760"/>`];
const noFly = [0, 10, 11];
$('toolbox').innerHTML = tools.map((t, i) => `<div class="tool ${noFly.includes(i) ? '' : 'fly'} ${i ? '' : 'on'}"><svg viewBox="0 0 17 17">${t}</svg></div>`).join('');

// Rulers: 2.3615 px per mm, origin at the page corner
const K = 2.3615, X0 = 468.5, Y0 = 1039.6;
let h = '<path d="M50 142.500H1898" stroke="#999"/><path d="M37 134.500h10M40.500 131v10" stroke="#000" stroke-dasharray="2 1"/><path d="M41 134l5 5m0-3v3h-3" stroke="#000" fill="none"/>';
for (let m = -175; m <= 605; m += 5) {
  const x = Math.floor(X0 + m * K) + .5, big = m % 50 === 0;
  h += `<path d="M${x} ${big ? 134 : 139}V${big ? 142 : 141}" stroke="#000"/>`;
  if (big && m < 600) h += `<text x="${x}" y="133" textLength="${String(Math.abs(m)).length * 5}">${Math.abs(m)}</text>`;
}
h += '<path d="M732.500 125v16" stroke="#000" stroke-dasharray="3 2"/><text x="1873" y="133" textLength="44">millimeters</text>';
$('rulerH').innerHTML = h;
let v = '<path d="M49.500 143V1015" stroke="#999"/>';
for (let m = 10; m <= 375; m += 5) {
  const y = Math.floor(Y0 - m * K - .5) + .5, big = m % 50 === 0;
  v += `<path d="M${big ? 45 : 47} ${y}H49" stroke="#000"/>`;
  if (big) v += `<text transform="translate(44 ${y}) rotate(-90)" textLength="${String(m).length * 5}">${m}</text>`;
}
v += '<path d="M34 877.500h15" stroke="#000" stroke-dasharray="3 2"/><text transform="translate(44 990) rotate(-90)" textLength="44">millimeters</text>';
$('rulerV').innerHTML = v;

// Drawing
const tx = (x, y, x2, size, s, extra = '') => `<text x="${x}" y="${y}" font-size="${size}" textLength="${(x2 - x).toFixed(1)}" lengthAdjust="spacingAndGlyphs" ${extra}>${s}</text>`;
const B = 'font-weight="700" stroke="#111" stroke-width=".4"', BI = 'font-weight="700" font-style="italic"';
const mark = (x, y, s) => `<g transform="translate(${x} ${y}) scale(${s / 11})"><path d="M0 0h11v11H0z"/><path d="M5.500 2L3.800 5.500h3.400zM3.400 6.200L1.500 9.500h3.600zM7.600 6.200L5.900 9.500h3.600z" fill="#fff" stroke="#fff" stroke-width=".4"/><path d="M5.500 4v5" stroke="#000"/></g>`;
const eac = (x, y) => `<path d="M${x + 3} ${y}h-3v11h3M${x} ${y + 5.5}h3M${x + 5} ${y + 11.5}v-11.500h3v11.500M${x + 5} ${y + 6}h3M${x + 12.5} ${y}h-2.500v11h2.500" fill="none" stroke="#000" stroke-width="1.100"/>`;
const stb = (x, y) => `<g fill="none" stroke="#222"><rect x="${x}" y="${y}" width="12.500" height="14" rx="1"/><circle cx="${x + 6.250}" cy="${y + 7}" r="4.800" stroke-width=".8"/><path d="M${x + 3} ${y + 5}h6M${x + 6} ${y + 4}v7M${x + 8.500} ${y + 4}v6h2v-3h-2" stroke-width=".9"/></g>`;
const ce = (x, y) => `<path d="M${x + 5} ${y + .500}a4.300 4.300 0 0 0 0 9M${x + 11} ${y + .500}a4.300 4.300 0 0 0 0 9M${x + 7} ${y + 5}h3.500" fill="none" stroke="#111" stroke-width="1.700"/>`;
const SP = '&#160;&#160;';
const thin = 'stroke="#111" stroke-width=".2"';
const ru = n => mark(554, 403, 11) + tx(566.3, 411.7, 612, 9, 'ATOMTEX', BI) + tx(540.7, 427, 625.3, 8.5, 'Дозиметр ДКС-АТ1121', B)
  + tx(550, 438.7, 600, 7.6, '15 кэВ ... 3 МэВ', B) + tx(550, 448, 611.7, 7.6, '50 нЗв/ч ... 10 Зв/ч', B) + tx(550, 457.5, 599, 7.6, '10 нЗв ... 10 Зв', B)
  + tx(550, 467, 571.7, 7.6, 'RS232', B) + tx(550, 476.3, 590, 7.6, `-30 ÷${SP}+50°C`, B) + eac(620.500, 462.5) + tx(601.7, 485.7, 619, 8, 'IP 54', thin)
  + tx(550, 499.5, 570, 6.2, 'ЗАВ.№') + tx(586.7, 500.5, 611.7, 9.2, n, B) + tx(550, 511, 619, 8, `Год выпуска${SP}2018г.`, B) + tx(553.7, 527.3, 613, 6.4, 'Сделано в Беларуси', thin);
const en = n => mark(557, 698, 10.5) + tx(569, 705.7, 615, 9, 'ATOMTEX', BI) + tx(555, 721.3, 621, 8.5, 'Dosimeter AT1121', B)
  + tx(553.3, 734, 609.3, 7.6, '15 keV ... 10 MeV', B) + tx(553.3, 743, 615.3, 7.6, '50 nSv/h ... 10 Sv/h', B) + tx(553.3, 752.3, 603, 7.6, '10 nSv ... 10 Sv', B)
  + tx(553.3, 761.8, 575.3, 7.6, 'RS232', B) + tx(553, 771.3, 593, 7.6, `-30 ÷${SP}+50°C`, B) + stb(623.3, 738.5) + eac(624, 757) + tx(604.7, 781, 622, 8, 'IP 54', thin)
  + tx(552.7, 793.9, 576, 6.2, 'Serial №') + tx(590, 795, 614.3, 9.2, n, B) + ce(624, 787) + tx(553, 805.9, 589.7, 8, `mfd.${SP}2018`, B) + tx(563.7, 821.8, 608, 6.4, 'Made in Belarus', thin);
const at = (t, s) => `<g transform="${t}">${s}</g>`;
const guide = 'stroke="#b8b8b8" stroke-dasharray="4 3" fill="none"';
const blade = a => `<path d="M-2.800 4.500L-6.500 11a13 13 0 0 0 13 0L2.800 4.500a5 5 0 0 1-5.600 0z" transform="rotate(${a})"/>`;
$('canvas').innerHTML =
  '<path d="M964 342h6.500v660H964z" fill="#c0c0c0"/><path d="M468.500 1000V338.500H964.500V1000" fill="#fff" stroke="#999"/>'
  + `<path d="M50 380.500H1880M50 886.500H1880M515.500 143V997M917.500 143V997" ${guide}/>`
  + '<path d="M516 399V381H534M899 381H917V399M516 868V886H534M899 886H917V868" fill="none" stroke="#222" stroke-width="1.300"/>'
  + '<g fill="#111">' + ru('44574') + at('translate(112.1 0)', ru('44581')) + at('translate(1.200 147.300)', ru('44584')) + at('translate(113.300 147.300)', ru('44576'))
  + en('44579') + at('translate(112.200 0)', en('44580'))
  + at('matrix(0 -1 1 0 358.800 1037)', ru('44582')) + at('matrix(0 -1 1 0 66.200 1151.500)', en('44578'))
  + tx(793.7, 636.9, 857, 6.4, 'Sample Counter AT1329', 'fill="#444"')
  + '<path d="M790 641.500h72M790 655.500h72M786 682.500h78M786 697.500h78" stroke="#222"/><path d="M793 644.500h25M793 649.500h20M830 660.500h32M827 699.500h33" stroke="#222" stroke-width="1.500"/>'
  + tx(834.7, 650.8, 848, 6.4, 'IP43', 'font-weight="700"') + mark(791.7, 658, 7) + tx(800.7, 664.2, 827.3, 6, 'ATOMTEX', BI + ' stroke="#111" stroke-width=".4"')
  + tx(813, 680.9, 835, 5.8, 'BDKA-07') + tx(787, 688.6, 805, 5.5, 'Serial N') + tx(787, 694.3, 797, 5.5, 'mfd.') + tx(809, 688.6, 817.7, 5.5, '004') + tx(806.7, 694.3, 817.7, 5.5, '2018')
  + tx(822.7, 692, 837, 7, 'IP43', thin) + eac(838.5, 684.5) + stb(851, 683.3) + mark(788, 699, 5) + tx(796, 703, 819.3, 4.5, 'ATOMTEX', BI)
  + tx(783.3, 728.5, 875.3, 10.5, 'CONTROLSOURCE', 'font-weight="700"') + tx(807.3, 739.8, 851.7, 10.5, 'OISN-210', 'font-weight="700"') + tx(805.7, 749.5, 853.3, 9.5, '(ОИСН-210)')
  + at('translate(830.300 769.300)', '<circle r="2.900"/>' + blade(0) + blade(120) + blade(240)) + tx(818.7, 798.5, 841, 10, '№76', 'font-weight="700"') + '</g>';

// Page navigator
const tabs = [1, 2, 3, 4, 5, 6].map(n => [n === 1 ? 257 : 262 + 61 * (n - 1), n === 1 ? 70 : 61, `<div class="tab ${n === 1 ? 'on' : ''}" style="width:${n === 1 ? 70 : 60}px"><div class="cell">${T('Page ' + n, 39)}</div></div>`, 'tabwrap']);
const addPage = S(10, 14, '<path d="M1 1h5l3 3v9H1z" fill="#fff" stroke="#000"/><path d="M5 5v6M2.500 8h5" stroke="#000"/>');
row('pager', [[58.5, 10, addPage],
  [75.5, 8, S(8, 10, '<path d="M1 0v10" stroke="#777" stroke-width="1.500"/><path d="M7 0v10L2 5z" fill="#777"/>')],
  [93.5, 8, S(8, 10, '<path d="M6 0v10L1 5z" fill="#777"/>')], [135.5, 33, T('1 of 6', 33)],
  [180, 8, S(8, 10, '<path d="M1 0v10l5-5z"/>')], [195.5, 8, S(8, 10, '<path d="M1 0v10l5-5z"/><path d="M7 0v10" stroke="#000" stroke-width="1.500"/>')],
  [212.5, 10, addPage], ...tabs, grip(970)], 50);
$('pager').classList.add('pg');

$('swatches').innerHTML = '151716 31312f 4c4c4c 656562 808080 989898 abadb0 c3c5c4 d8dad9 ebebeb ffffff 3d2b97 00a1d6 00a650 f9e014 da291c e5007e aa468b f07d00 ffb6bd 7b6b63 d8d2f2 ada1e0 7590d0 8870c6 9286b5 4f608a 584f6b 6d7f98 0093cf aedaf0 b6c9d6 90a0ab 6a7880 424a4c 556f6d 4c8778 75948f 60b09e 66a879 84d8df 64aeb8 b6ccbc dff9df b5f1b9 919f94'
  .split(' ').map(c => `<i style="background:#${c}"></i>`).join('');

// Status bar
row('status', [[53, 95, T('( 111,751; 68,685 )', 95)], [122, 6, S(6, 10, '<path d="M0 0v10l6-5z"/>')],
  [1673, 16, S(16, 16, '<path d="M1 1h14v11H1z" fill="#9ab" stroke="#446"/><path d="M2 2h6v5H2z" fill="#c77"/><path d="M8 2h6v5H8z" fill="#7a9"/><circle cx="8" cy="7" r="3" fill="#fff" stroke="#222"/><path d="M4 15h8" stroke="#88a" stroke-width="1.500"/>')],
  sep(1707), [1718, 16, S(16, 16, '<path d="M1 8l6-6 6 6-6 7z" fill="#fff" stroke="#446"/><path d="M2 9h10l-5 5z" fill="#f08000"/><path d="M13 7c2 1 2 4 2 6" stroke="#f08000" stroke-width="2" fill="none"/>')],
  [1741, 18, S(18, 18, '<path d="M.500.500h17v17H.500z" fill="#fff" stroke="#888"/><path d="M2 2l14 14M16 2L2 16" stroke="#000"/>')]]);

// Taskbar
const note = S(32, 32, '<path d="M3 3h5v18H3z" fill="#ff0" stroke="#000"/><path d="M3 3l2.500-3L8 3z"/><path d="M11 1h20v22H11z" fill="#fff" stroke="#000" stroke-width="1.300"/><path d="M14 5h6m2 0h5M14 8h9m2 0h2M14 11h4m2 0h7M14 14h8m2 0h3M14 17h5m2 0h5M14 20h9" stroke="#444" stroke-dasharray="3 1"/><path d="M5 22c0 9 9 5 15 7 6-1 5-3 5-5" fill="none" stroke="#bbb" stroke-width="1.500"/>');
row('taskbar', [
  [27, 38, '<svg width="38" height="38" viewBox="0 0 38 38"><defs><radialGradient id="orb" cx=".5" cy=".85"><stop stop-color="#4fd6f5"/><stop offset=".5" stop-color="#1a6aa5"/><stop offset="1" stop-color="#7aa5c8"/></radialGradient></defs><circle cx="19" cy="19" r="17.500" fill="url(#orb)" stroke="#24435e" stroke-width="1.500"/><path d="M10 12c3-2 5-2 8 0l-1 7c-3-2-6-2-8 0z" fill="#f0582a"/><path d="M19 12c3 2 6 2 9 0l-2 7c-2 2-5 2-8 0z" fill="#8cc63f"/><path d="M9 20c2-2 5-2 8 0l-1 7c-3-2-6-2-8 0z" fill="#3fa5e5"/><path d="M18 20c3 2 5 2 8 0l-1 7c-3 2-6 2-8 0z" fill="#fbd43a"/></svg>'],
  [88.500, 34, S(34, 36, '<path d="M2 2h31v8c-2 6-1 16-1 25H3c2-10 1-20-1-33z" fill="#537f99"/><path d="M3 3h29v7c-6 2-12 0-28 5z" fill="#36586b"/><path d="M3 12c5-5 9-4 12-3 2-4 5-5 7-3-4 0-5 3-5 5-4-1-8-3-14 1zM8 7c4-4 7-3 9-2 2-3 4-4 6-2-4 0-5 2-6 4-3-1-5-2-9 0z" fill="#fff"/><path d="M12 20h13M9 26h12M12 32h16" stroke="#b7ced9" stroke-width="2"/>')],
  [151, 34, S(34, 32, '<path d="M1 2h12l2 3h17v24H1z" fill="#e8cf72" stroke="#b08f3a"/><path d="M4 3h5v3H4z" fill="#3a3"/><path d="M13 5h5v3h-5z" fill="#d33"/><path d="M21 7h6v3h-6z" fill="#38c"/><path d="M2 8l31 2v20H2z" fill="#fbeaa2"/><path d="M5 32V20h24v12h-5v-7H10v7z" fill="#9fd6ee" stroke="#62a5c8"/>')],
  [263, 158, '<svg width="34" height="34" viewBox="0 0 34 34"><circle cx="17" cy="18" r="14" fill="#ff9419"/><path d="M3 14c1-6 3-8 5-10 0 3 1 4 3 5l4 1-5 9c-1 3 4 8 9 7s9-5 8-11c0-5-4-7-3-13 6 4 9 10 8 17s-7 13-15 13S2 25 3 14z" fill="#ff5a1f"/><path d="M22 3c7 5 9 10 8 17-1 5-4 8-8 10 5-8 3-15 0-19z" fill="#ffd53a"/><circle cx="17" cy="17" r="6.500" fill="#26489c"/><path d="M9 15c3-2 7-1 9 1-4 1-3 4-7 4z" fill="#ff8a16"/></svg>' + T('БДКГ-204 - Mozill...', 103), 'tbtn'],
  [374, 10, '<svg width="10" height="30" viewBox="0 0 10 30"><path d="M1 2q4-3 8 0v26q-4 2-8 0z" fill="#55565a"/><path d="M3 2h2v26H3z" fill="#a6a6a8"/><path d="M1 2q4-3 8 0v5H1z" fill="#ccc"/></svg>'],
  [437, 32, S(32, 30, '<path d="M1 13l17-12 11 8-16 13z" fill="#bbb" stroke="#444"/><path d="M1 13l12 9 16-13v4L13 27 1 18z" fill="#777"/><path d="M3 16v6M6 18v7M9 21v6M12 23v6M18 19v6M22 16v6" stroke="#222" stroke-width="1.500"/><path d="M19 14l12 8-10 7z" fill="#f01c74"/>')],
  [549, 158, S(34, 34, '<path d="M4 2h17c12 6 11 24 1 30H4z" fill="#8cc21f"/><path d="M21 2c10 6 12 24 1 30" fill="none" stroke="#b7dc62" stroke-width="3"/><path d="M5 4l6-1 12 19v9L9 24z" fill="#fff"/><path d="M8 4l2 16M12 5l-1 17M5 12l14 9" stroke="#8cc21f"/><path d="M18 27l6 4-1-6z" fill="#234"/>') + T('CorelDRAW X5 - [...', 102), 'tbtn on'],
  [661, 32, '<svg width="32" height="32" viewBox="0 0 32 32"><path d="M0 0h32v32H0z" fill="#00f"/><path d="M1 1h30v15H1z" fill="#fff"/><text x="3" y="13.500" font-size="10.500" font-weight="700" fill="#00f" stroke="#00f" stroke-width=".5" textLength="26" lengthAdjust="spacingAndGlyphs">ATMEL</text><path d="M6 3h24M2 15h28" stroke="#00f" stroke-width="1.200"/><text x="6" y="27" font-size="13" font-weight="700" font-style="italic" fill="#fff" textLength="20" lengthAdjust="spacingAndGlyphs">flip</text></svg>'],
  [722, 32, note], [783.500, 32, note],
  [845.5, 26, S(26, 26, '<path d="M1 1h20v24H1z" fill="#7db9da" stroke="#b5dcef"/><path d="M22 2h1v22h-1zM24 2h1v22h-1z" fill="#9bd0e8" stroke="#9bd0e8"/><ellipse cx="10" cy="13" rx="7.500" ry="9" fill="#f36f1e"/><path d="M7 7l9 6-9 6z" fill="#fff"/>')],
  [1663, 16, T('RU', 16), 'lang'],
  [1694, 16, S(16, 16, '<path d="M2 1v15" stroke="#fff" stroke-width="1.500"/><path d="M3 2h8v8H3z" fill="#fff"/><circle cx="11" cy="11" r="4.500" fill="#e2261c"/><path d="M9 9l4 4m0-4l-4 4" stroke="#fff" stroke-width="1.500"/>')],
  [1718, 16, S(16, 16, '<path d="M1 5l3-2h5v11H1z" fill="#f0dc80"/><path d="M3 10h12v5H3z" fill="#ccc" stroke="#333"/><path d="M7 1h9v9H7z" fill="#2a6ad0" stroke="#dde"/><path d="M11.500 2v1.500M11.500 4.500V9" stroke="#fff" stroke-width="2"/>')],
  [1742, 16, S(16, 16, '<path d="M1 1h14v14H1z" fill="#f4f4f4"/><path d="M1 1h5v14H1z" fill="#d22"/><path d="M1 1h14L4 14z" fill="#e22"/><path d="M14 3L5 10v-3z" fill="#fff"/><path d="M8 9h6v5H8z" fill="#555"/><path d="M9 8l5 6" stroke="#fff" stroke-width="1.500"/>')],
  [1766, 18, S(18, 16, '<path d="M1 7c2-1 3 0 4 2C4 5 5 3 6 3s2 2 3 5c1-3 2-5 3-5s2 2 1 6c1-2 2-3 4-2-1 4-3 7-8 7S2 11 1 7z" fill="#6bb2f0" stroke="#2464b8"/><path d="M6 10l1-5 2 6 2-6 1 5" fill="none" stroke="#fff" stroke-width="1.500"/>')],
  [1790, 18, S(18, 16, '<path d="M5 4h11v8H5z" fill="#3a3d4e" stroke="#fff" stroke-width="1.300"/><path d="M7 15h8M11 12v3M2 1v4h4V1M4 5v7h2" stroke="#fff" stroke-width="1.300" fill="none"/>')],
  [1814, 18, S(18, 16, '<path d="M2 5h3l4-4v14l-4-4H2z" fill="#fff"/><path d="M11 5q2 3 0 6M13 3q4 5 0 10" stroke="#fff" fill="none"/>')],
  [1867, 56, T('14:39', 27) + T('12.03.2018', 54), 'clock'], [1912.500, 14, '', 'showdesk']]);

// Fit each caption to the width its slot gives it
document.querySelectorAll('[data-w]').forEach(e => {
  const n = e.textContent.length;
  e.style.letterSpacing = ((+e.dataset.w - e.offsetWidth) / n).toFixed(3) + 'px';
});
```
